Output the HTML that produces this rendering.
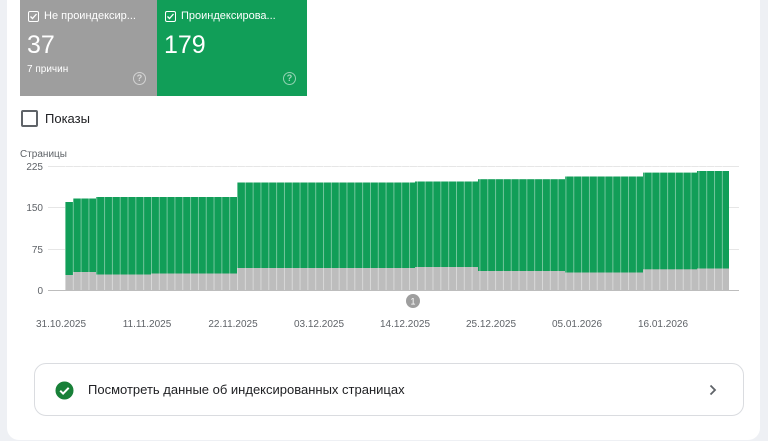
<!DOCTYPE html>
<html><head><meta charset="utf-8"><style>
*{margin:0;padding:0;box-sizing:border-box}
body{width:768px;height:441px;background:#eef0f4;font-family:"Liberation Sans",Roboto,"Noto Sans CJK SC",sans-serif;position:relative;overflow:hidden}
.card{position:absolute;left:7px;top:0;width:753px;height:440px;background:#fff;border-radius:0 0 12px 12px}
.tile{position:absolute;top:0;height:96px;color:#fff}
.t1{left:20px;width:137px;background:#9e9e9e}
.t2{left:157px;width:150px;background:#119e58}
.lbl{position:absolute;left:8px;top:10px;font-size:11px;display:flex;align-items:center;gap:5px;white-space:nowrap}
.cb{width:11px;height:11px;border:1px solid #fff;border-radius:2px;display:inline-flex;align-items:center;justify-content:center}
.num{position:absolute;left:7px;top:31px;font-size:25px}
.sub{position:absolute;left:7px;top:64px;font-size:10px}
.q{position:absolute;right:11px;top:72px;width:13px;height:13px;border:1.3px solid rgba(255,255,255,.55);border-radius:50%;font-size:9px;color:rgba(255,255,255,.6);text-align:center;line-height:11px;font-weight:bold}
.btn{position:absolute;left:34px;top:363px;width:710px;height:53px;border:1px solid #dadce0;border-radius:12px}
</style></head><body>
<div class="card"></div>
<div class="tile t1"><div class="lbl"><span class="cb"><svg width="9" height="9" viewBox="0 0 9 9"><path d="M1.5 4.5l2 2 4-4.5" stroke="#fff" stroke-width="1.3" fill="none"/></svg></span>Не проиндексир...</div><div class="num">37</div><div class="sub">7 причин</div><div class="q">?</div></div>
<div class="tile t2"><div class="lbl"><span class="cb"><svg width="9" height="9" viewBox="0 0 9 9"><path d="M1.5 4.5l2 2 4-4.5" stroke="#fff" stroke-width="1.3" fill="none"/></svg></span>Проиндексирова...</div><div class="num">179</div><div class="q">?</div></div>
<div style="position:absolute;left:21px;top:110px;width:17px;height:17px;border:2px solid #5f6368;border-radius:2px"></div>
<div style="position:absolute;left:45px;top:111px;font-size:13px;color:#202124">Показы</div>
<svg style="position:absolute;left:0;top:0" width="768" height="441">
<defs><pattern id="p" x="65" y="0" width="7.82" height="441" patternUnits="userSpaceOnUse"><rect x="0" y="0" width="0.9" height="441" fill="#fff" opacity=".45"/></pattern></defs>
<g font-size="10" fill="#5f6368">
<text x="20" y="157">Страницы</text>
<g text-anchor="end"><text x="43" y="170">225</text><text x="43" y="211">150</text><text x="43" y="253">75</text><text x="43" y="294">0</text></g>
</g>
<g stroke="#e6e6e6"><line x1="48" y1="166.5" x2="739" y2="166.5"/><line x1="48" y1="207.5" x2="739" y2="207.5"/><line x1="48" y1="249.5" x2="739" y2="249.5"/></g>
<g fill="#119e58">
<rect x="65" y="202" width="8" height="88"/><rect x="73" y="198.5" width="23" height="91.5"/><rect x="96" y="197" width="141" height="93"/><rect x="237" y="182.5" width="178" height="107.5"/><rect x="415" y="181.5" width="63" height="108.5"/><rect x="478" y="179.2" width="87" height="110.8"/><rect x="565" y="176.5" width="78" height="113.5"/><rect x="643" y="172.6" width="54" height="117.4"/><rect x="697" y="171" width="32" height="119"/>
</g>
<g fill="#bdbdbd">
<rect x="65" y="275" width="8" height="15"/><rect x="73" y="272" width="23" height="18"/><rect x="96" y="274.5" width="55" height="15.5"/><rect x="151" y="273.5" width="86" height="16.5"/><rect x="237" y="268" width="178" height="22"/><rect x="415" y="267" width="63" height="23"/><rect x="478" y="271" width="87" height="19"/><rect x="565" y="272.5" width="78" height="17.5"/><rect x="643" y="269.3" width="54" height="20.7"/><rect x="697" y="268.5" width="32" height="21.5"/>
</g>
<rect x="65" y="160" width="664" height="130" fill="url(#p)"/>
<line x1="48" y1="290.5" x2="739" y2="290.5" stroke="#bdbdbd"/>
<circle cx="413" cy="301" r="7" fill="#9e9e9e"/><text x="413" y="304.5" font-size="9" fill="#fff" text-anchor="middle">1</text>
<g font-size="10" fill="#5f6368" text-anchor="middle">
<text x="61" y="327">31.10.2025</text><text x="147" y="327">11.11.2025</text><text x="233" y="327">22.11.2025</text><text x="319" y="327">03.12.2025</text><text x="405" y="327">14.12.2025</text><text x="491" y="327">25.12.2025</text><text x="577" y="327">05.01.2026</text><text x="663" y="327">16.01.2026</text>
</g>
</svg>
<div class="btn"></div>
<svg style="position:absolute;left:55px;top:381px" width="19" height="19" viewBox="0 0 19 19"><circle cx="9.5" cy="9.5" r="9" fill="#188038"/><path d="M5.2 9.7l2.9 2.9 5.6-5.8" stroke="#fff" stroke-width="2" fill="none"/></svg>
<div style="position:absolute;left:88px;top:382px;font-size:13px;color:#202124">Посмотреть данные об индексированных страницах</div>
<svg style="position:absolute;left:708px;top:384px" width="10" height="12" viewBox="0 0 10 12"><path d="M2.5 1.5l4.5 4.5-4.5 4.5" stroke="#5f6368" stroke-width="1.8" fill="none"/></svg>
</body></html>
